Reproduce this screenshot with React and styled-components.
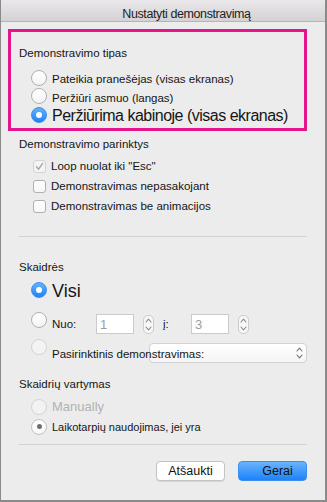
import React from "react";
import styled, { createGlobalStyle, css } from "styled-components";

const GlobalStyle = createGlobalStyle`
  html, body {
    margin: 0;
    padding: 0;
    background: #ececec;
  }
  body {
    font-family: "Liberation Sans", Arial, sans-serif;
  }
`;

const Window = styled.div`
  box-sizing: border-box;
  width: 327px;
  height: 502px;
  background: #ececec;
  border-left: 1px solid #8a8a8a;
  border-right: 2px solid #8a8a8a;
  border-bottom: 2px solid #8a8a8a;
  display: flex;
  flex-direction: column;
  color: #151515;
  font-size: 11.5px;
`;

const TitleBar = styled.div`
  box-sizing: border-box;
  height: 22px;
  border-bottom: 1px solid #b4b4b4;
  background: linear-gradient(#e9e7e9, #d4d2d4);
  display: flex;
  justify-content: center;
  align-items: center;
  padding: 6px 0 0 47px;
  font-size: 12.5px;
  letter-spacing: -0.4px;
  color: #1e1e1e;
`;

const Content = styled.div`
  flex: 1;
  display: flex;
  flex-direction: column;
  padding: 7px 18px 0 18px;
`;

const Highlight = styled.div`
  margin-left: -11px;
  border: 3px solid #e5148b;
  padding: 14px 0 4px 8px;
  display: flex;
  flex-direction: column;
`;

const GroupLabel = styled.div`
  height: 14px;
  line-height: 14px;
  margin-top: ${(p) => p.$gap || 0}px;
  white-space: nowrap;
`;

const Row = styled.div`
  display: flex;
  align-items: center;
  height: ${(p) => p.$h}px;
  margin-top: ${(p) => p.$gap || 0}px;
  padding-left: ${(p) => p.$indent || 12}px;
  white-space: nowrap;
`;

const Label = styled.span`
  position: relative;
  z-index: 1;
  margin-left: 5px;
  margin-top: ${(p) => (p.$shift === undefined ? 3 : p.$shift)}px;
  font-size: ${(p) => p.$size || 11.5}px;
  letter-spacing: ${(p) => p.$spacing || 0}px;
  color: ${(p) => (p.$muted ? "#b2b2b2" : "#151515")};
  ${(p) =>
    p.$width &&
    css`
      width: ${p.$width}px;
      flex: none;
    `}
`;

const radioLooks = {
  off: css`
    background: linear-gradient(#ffffff, #f3f3f3);
    border: 1px solid #b0b0b0;
  `,
  on: css`
    background: linear-gradient(#68b1fb, #1c83fa);
    border: 1px solid #3a8ff0;
    &::after {
      content: "";
      width: 6px;
      height: 6px;
      border-radius: 50%;
      background: #fff;
    }
  `,
  disabled: css`
    background: #f3f3f3;
    border: 1px solid #d3d3d3;
  `,
  dimmed: css`
    background: linear-gradient(#ffffff, #f6f6f6);
    border: 1px solid #c2c2c2;
    &::after {
      content: "";
      width: 5px;
      height: 5px;
      border-radius: 50%;
      background: #6e6e6e;
    }
  `,
};

const Radio = styled.span`
  box-sizing: border-box;
  flex: none;
  width: 16px;
  height: 16px;
  border-radius: 50%;
  display: flex;
  align-items: center;
  justify-content: center;
  margin-bottom: ${(p) => p.$lift || 0}px;
  ${(p) => radioLooks[p.$look || "off"]}
`;

const Check = styled.span`
  box-sizing: border-box;
  flex: none;
  width: 13px;
  height: 13px;
  border-radius: 3px;
  display: flex;
  align-items: center;
  justify-content: center;
  background: ${(p) => (p.$disabled ? "#f4f4f4" : "linear-gradient(#ffffff, #f6f6f6)")};
  border: 1px solid ${(p) => (p.$disabled ? "#d2d2d2" : "#b0b0b0")};
`;

const Divider = styled.div`
  height: 1px;
  background: #d3d3d3;
  margin-top: ${(p) => p.$gap}px;
`;

const NumberBox = styled.div`
  box-sizing: border-box;
  flex: none;
  width: 38px;
  height: 20px;
  background: #fff;
  border: 1px solid #cbcbcb;
  padding-left: 3px;
  display: flex;
  align-items: center;
  font-size: 13px;
  color: #9c9c9c;
`;

const Stepper = styled.div`
  box-sizing: border-box;
  flex: none;
  width: 11px;
  height: 19px;
  margin: 0 ${(p) => p.$right}px 0 9px;
  border: 1px solid #cdcdcd;
  border-radius: 5px;
  background: #f7f7f7;
  display: flex;
  align-items: center;
  justify-content: center;
`;

const SelectBox = styled.div`
  box-sizing: border-box;
  flex: 1;
  height: 20px;
  border: 1px solid #d2d2d2;
  border-radius: 4px;
  background: linear-gradient(#ffffff, #f5f5f5);
  display: flex;
  align-items: center;
  justify-content: flex-end;
  padding-right: 3px;
`;

const ButtonRow = styled.div`
  display: flex;
  justify-content: flex-end;
  gap: 13px;
  margin-top: 16px;
`;

const Button = styled.button`
  box-sizing: border-box;
  width: 69px;
  height: 20px;
  padding: 0 0 0 ${(p) => (p.$primary ? 10 : 0)}px;
  border-radius: 4px;
  font-family: "Liberation Sans", Arial, sans-serif;
  font-size: 12.5px;
  color: #111;
  ${(p) =>
    p.$primary
      ? css`
          border: 1px solid #3b8ef0;
          background: linear-gradient(#6cb3fb, #1b83fb);
        `
      : css`
          border: 1px solid #c3c3c3;
          background: #fff;
          box-shadow: 0 1px 0 #d6d6d6;
        `}
`;

function Chevrons({ height = 15, color = "#8a8a8a" }) {
  return (
    <svg width="7" height={height} viewBox={`0 0 7 ${height}`} fill="none">
      <path d="M1 5 L3.5 2.2 L6 5" stroke={color} strokeWidth="1.1" strokeLinecap="round" strokeLinejoin="round" />
      <path d={`M1 ${height - 5} L3.5 ${height - 2.2} L6 ${height - 5}`} stroke={color} strokeWidth="1.1" strokeLinecap="round" strokeLinejoin="round" />
    </svg>
  );
}

function Tick() {
  return (
    <svg width="9" height="9" viewBox="0 0 9 9" fill="none">
      <path d="M1.5 4.8 L3.6 7.2 L7.6 1.4" stroke="#a4a4a4" strokeWidth="1.3" strokeLinecap="round" strokeLinejoin="round" />
    </svg>
  );
}

export default function App() {
  return (
    <>
      <GlobalStyle />
      <Window>
        <TitleBar>Nustatyti demonstravimą</TitleBar>
        <Content>
          <Highlight>
            <GroupLabel>Demonstravimo tipas</GroupLabel>
            <Row $h={19} $gap={8}>
              <Radio />
              <Label>Pateikia pranešėjas (visas ekranas)</Label>
            </Row>
            <Row $h={18}>
              <Radio />
              <Label>Peržiūri asmuo (langas)</Label>
            </Row>
            <Row $h={19}>
              <Radio $look="on" />
              <Label $size={16} $spacing={-0.5}>
                Peržiūrima kabinoje (visas ekranas)
              </Label>
            </Row>
          </Highlight>

          <GroupLabel $gap={6}>Demonstravimo parinktys</GroupLabel>
          <Row $h={20} $gap={5} $indent={14}>
            <Check $disabled>
              <Tick />
            </Check>
            <Label $shift={0}>Loop nuolat iki "Esc"</Label>
          </Row>
          <Row $h={20} $indent={14}>
            <Check />
            <Label $shift={0}>Demonstravimas nepasakojant</Label>
          </Row>
          <Row $h={20} $indent={14}>
            <Check />
            <Label $shift={0}>Demonstravimas be animacijos</Label>
          </Row>

          <Divider $gap={20} />

          <GroupLabel $gap={23}>Skaidrės</GroupLabel>
          <Row $h={22} $gap={5}>
            <Radio $look="on" />
            <Label $size={18}>Visi</Label>
          </Row>
          <Row $h={26} $gap={10}>
            <Radio $lift={8} />
            <Label $shift={0} $width={44}>
              Nuo:
            </Label>
            <NumberBox>1</NumberBox>
            <Stepper $right={9}>
              <Chevrons />
            </Stepper>
            <Label $shift={0} $width={28} style={{ marginLeft: 0 }}>
              į:
            </Label>
            <NumberBox>3</NumberBox>
            <Stepper $right={0}>
              <Chevrons />
            </Stepper>
          </Row>
          <Row $h={28} $gap={2}>
            <Radio $look="disabled" $lift={12} />
            <Label $shift={2} $width={97}>
              Pasirinktinis demonstravimas:
            </Label>
            <SelectBox>
              <Chevrons height={14} color="#6f6f6f" />
            </SelectBox>
          </Row>

          <GroupLabel $gap={10}>Skaidrių vartymas</GroupLabel>
          <Row $h={19} $gap={6}>
            <Radio $look="disabled" />
            <Label $shift={0} $size={13} $muted>
              Manually
            </Label>
          </Row>
          <Row $h={19} $gap={1}>
            <Radio $look="dimmed" />
            <Label $shift={1} $size={11}>
              Laikotarpių naudojimas, jei yra
            </Label>
          </Row>

          <Divider $gap={8} />

          <ButtonRow>
            <Button>Atšaukti</Button>
            <Button $primary>Gerai</Button>
          </ButtonRow>
        </Content>
      </Window>
    </>
  );
}
